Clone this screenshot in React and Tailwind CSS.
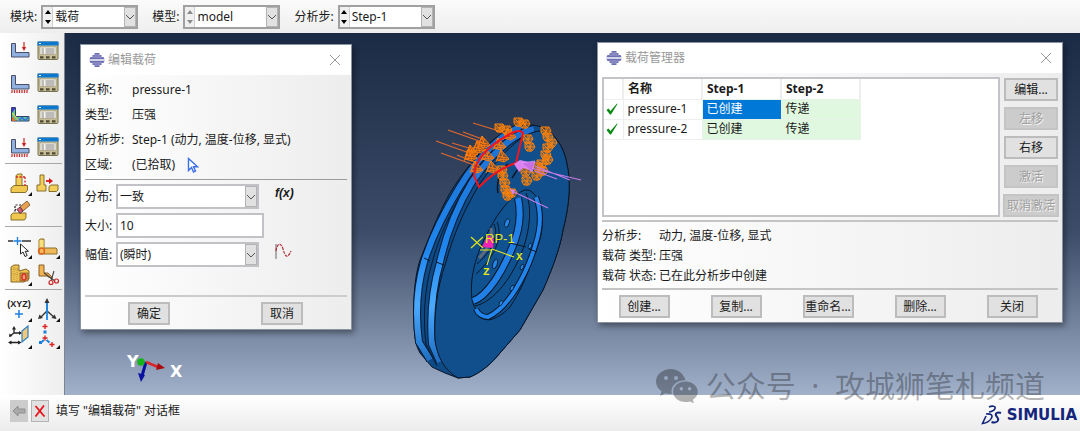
import React, { useState } from 'react'
import clsx from 'clsx'

/* ---------- toolbar icons ---------- */

const Corner = () => <path d="M24 20v4h-4z" fill="#111" />

const Bracket = ({ fill = '#8fb0e0' }) => (
    <path d="M3.500 4.500h4v9h13.500v4.500H3.500z" fill={fill} stroke="#4a4f66" strokeWidth="1" />
)

const LoadIcon = () => (
    <>
        <Bracket />
        <path d="M16 3v7" stroke="#c22" strokeWidth="1.200" />
        <path d="M13.800 8h4.400L16 12z" fill="#c22" />
    </>
)

const BoundaryIcon = () => (
    <>
        <Bracket />
        <path d="M4 19v3M6.500 19v3M9 19v3M11.500 19v3M14 19v3M16.500 19v3M19 19v3" stroke="#c33" strokeWidth="1.300" />
    </>
)

const FieldIcon = () => (
    <>
        <path d="M3.500 4.500h4v9h13.500v4.500H3.500z" fill="#5bc98c" stroke="#30406a" />
        <path d="M4 5h3.500L4 10z" fill="#4433cc" />
        <path d="M4 13l4 5H4z" fill="#e07030" />
        <path d="M8 14l3 3.500 3-3 3 3 3.500-3.500" fill="none" stroke="#3a6be0" strokeWidth="1.500" />
        <path d="M4.500 10l6 7.500" stroke="#e8d84a" strokeWidth="1.200" />
    </>
)

const LoadCaseIcon = () => (
    <>
        <LoadIcon />
        <path d="M4 19v3M6.500 19v3M9 19v3M11.500 19v3M14 19v3M16.500 19v3M19 19v3" stroke="#c33" strokeWidth="1.300" />
    </>
)

const ManagerIcon = () => (
    <>
        <rect x="2" y="3" width="20" height="17.500" rx="1" fill="#c6bd98" stroke="#77724f" />
        <rect x="1.500" y="2.500" width="21" height="4" fill="#0d78cf" />
        <path d="M3 4.500h2" stroke="#fff" />
        <rect x="4" y="8" width="16" height="7.500" fill="#f7f6ee" stroke="#999272" strokeWidth=".6" />
        <path d="M5.500 10h2.500M9.500 10h9M5.500 12h2.500M9.500 12h9M5.500 14h2.500M9.500 14h9" stroke="#666" strokeWidth=".8" />
        <path d="M4 18.300h3.500M10 18.300h3.500M16 18.300h3.500" stroke="#4e4a33" strokeWidth="2.200" />
    </>
)

const PartitionIcon = () => (
    <>
        <path d="M8 3.500l2-1.500h4v13H8z" fill="#f3cf5a" stroke="#7a6420" strokeWidth=".9" />
        <path d="M3 16l3-2.500h13.500V18l-2 2.500H3z" fill="#f0c850" stroke="#7a6420" strokeWidth=".9" />
        <path d="M8 5h9M17 5v9" stroke="#d22" fill="none" strokeWidth="1.300" strokeDasharray="2 1.500" />
        <Corner />
    </>
)

const ExtendIcon = () => (
    <>
        <path d="M4 3h4v10h2v6H1v-6h3z" fill="#f3cf5a" stroke="#7a6420" strokeWidth=".9" />
        <path d="M13 14.500l2-1.500h7v5l-1.500 1.500H13z" fill="#f3cf5a" stroke="#7a6420" strokeWidth=".9" />
        <path d="M10 9h4" stroke="#d11" strokeWidth="1.800" />
        <path d="M13 6l4 3-4 3z" fill="#d11" />
        <Corner />
    </>
)

const EraseIcon = () => (
    <>
        <path d="M7 16V6h8M8 10l-2 3" fill="none" stroke="#222" strokeWidth="1.200" strokeDasharray="2 1.500" />
        <path d="M3 16l2-2h13v4.500L16.500 21H3z" fill="#f0c850" stroke="#7a6420" strokeWidth=".9" />
        <path d="M12 8l3 4 7-6-3-4z" fill="#e8a352" stroke="#7b5424" strokeWidth=".9" />
        <path d="M12 8l3 4-3 2.500L9 10.500z" fill="#d2607a" stroke="#5a2c3a" strokeWidth=".9" />
    </>
)

const PickIcon = () => (
    <>
        <path d="M0 6h5M14 6h9" stroke="#333" strokeWidth="1.300" />
        <path d="M9.500 2v8M5.500 6h8" stroke="#1c7fe0" strokeWidth="1.300" />
        <path d="M12.500 9v10l2.500-2 2 4.500 2.200-1-2-4.200h3.300z" fill="#fff" stroke="#222" />
        <Corner />
    </>
)

const FilletIcon = () => (
    <>
        <path d="M3 5l1.500-1H8v9h12l1 1v5H3z" fill="#f0b95a" stroke="#7a6420" strokeWidth=".9" />
        <path d="M3.500 5h4v8h-4z" fill="#f8e07c" />
        <circle cx="5.500" cy="16" r="3" fill="none" stroke="#e0641e" strokeWidth="1.400" />
        <Corner />
    </>
)

const MeshIcon = () => (
    <>
        <path d="M3 5l3-2h5v6l7-2 3 2v8l-5 3H3z" fill="#ecc152" stroke="#7a5c20" strokeWidth=".9" />
        <path d="M3 7h8M6 3v16M9 6v13M3 12h8" stroke="#a37c2a" strokeWidth=".6" strokeDasharray="1 1" />
        <path d="M12 11h8v8h-8z" fill="#cf8f46" stroke="#7a5c20" strokeWidth=".7" />
        <ellipse cx="16" cy="15" rx="2" ry="3.200" fill="#f0a070" stroke="#d22" strokeWidth="1.200" />
        <Corner />
    </>
)

const CutIcon = () => (
    <>
        <path d="M3 3h5v8h4l4 4v2l-5-3H3z" fill="#f3b552" stroke="#7a5420" strokeWidth=".9" />
        <path d="M8 11l11 8M18 9l-3 10" stroke="#444" strokeWidth="1.100" />
        <circle cx="15" cy="20.500" r="2" fill="none" stroke="#c22" strokeWidth="1.200" />
        <circle cx="20.500" cy="19" r="2" fill="none" stroke="#c22" strokeWidth="1.200" />
    </>
)

const XyzIcon = () => (
    <>
        <text x="11" y="9" textAnchor="middle" fontFamily="Liberation Sans" fontWeight="bold" fontSize="9" fill="#222">(XYZ)</text>
        <path d="M11 12v8M7 16h8" stroke="#1c7fe0" strokeWidth="1.500" />
        <Corner />
    </>
)

const AxesIcon = () => (
    <>
        <path d="M11 3v10M4 20l7-7 8 7" fill="none" stroke="#333" strokeWidth="1.300" />
        <path d="M11 3v19" stroke="#1c86e8" strokeWidth="1.800" />
        <path d="M11 0L8.500 5h5zM2 21l1.500-4.500L7 20zM20.500 21L15.500 20l3.200-3.500z" fill="#333" />
        <Corner />
    </>
)

const PlaneIcon = () => (
    <>
        <path d="M6 3v5l-4 3M6 8h7M2 17.500h10" fill="none" stroke="#222" strokeWidth="1.300" />
        <path d="M6 1L4 4.500h4zM14 8l-3-2v4zM1 12l.5-3.500L4.500 11zM0 17.500l3.500-2v4zM13.500 17.500l-3.500-2v4z" fill="#222" />
        <path d="M14 6l6-5v11l-6 5z" fill="#f3c977" stroke="#2d7fc4" strokeWidth="1.200" />
        <Corner />
    </>
)

const CsysIcon = () => (
    <>
        <rect x="7.500" y="5.500" width="3" height="3" fill="#1c7fe0" />
        <rect x="3" y="16" width="3" height="3" fill="#1c7fe0" />
        <path d="M8 15l-3 2.500M10.500 15l3 2.500" stroke="#1c7fe0" strokeWidth="2" />
        <path d="M9-1v5M6.500 1.500h5M9 10.500v5M6.500 13h5M16 17v5M13.500 19.500h5" stroke="#d22" strokeWidth="1.400" />
        <Corner />
    </>
)

const toolGroups = [
    [
        ['创建载荷', LoadIcon], ['载荷管理器', ManagerIcon],
        ['创建边界条件', BoundaryIcon], ['边界条件管理器', ManagerIcon],
        ['创建预定义场', FieldIcon], ['预定义场管理器', ManagerIcon],
        ['创建载荷工况', LoadCaseIcon], ['载荷工况管理器', ManagerIcon],
    ],
    [
        ['拆分面', PartitionIcon], ['延伸面', ExtendIcon],
        ['删除特征', EraseIcon],
    ],
    [
        ['拆分边', PickIcon], ['圆角', FilletIcon],
        ['网格', MeshIcon], ['切割', CutIcon],
    ],
    [
        ['创建基准点', XyzIcon], ['创建基准轴', AxesIcon],
        ['创建基准平面', PlaneIcon], ['创建坐标系', CsysIcon],
    ],
]

const ToolBox = () => (
    <aside className="w-[65px] shrink-0 border-r border-[#7d8594] bg-linear-to-r from-white to-[#eeeeee] pr-0.5 pl-[5px] pt-0.5">
        {toolGroups.map((group, i) => (
            <div
                key={i}
                className={clsx('grid grid-cols-[28px_28px] pl-px', i > 0 && 'border-t border-[#a8a8a8] pt-1.5 pb-0.5')}
            >
                {group.map(([name, Icon]) => (
                    <button key={name} title={name} className={clsx('flex items-center justify-center', i === 0 ? 'h-8' : 'h-[27px]')}>
                        <svg viewBox="0 0 24 24" className="size-6 overflow-visible"><Icon /></svg>
                    </button>
                ))}
            </div>
        ))}
    </aside>
)

/* ---------- small controls ---------- */

const Chevron = ({ className }) => (
    <span className={clsx('pointer-events-none absolute flex items-center justify-center border border-[#b4b4b4] bg-[#e1e1e1]', className)}>
        <svg viewBox="0 0 10 6" className="h-1.5 w-2.5 shrink-0"><path d="M1 1l4 4 4-4" fill="none" stroke="#555" /></svg>
    </span>
)

const ContextSelect = ({ id, label, value, disabled }) => (
    <div className="flex items-center gap-1">
        <label htmlFor={id}>{label}</label>
        <div className="relative flex h-6 w-[97px] border-2 border-[#a0a0a0] bg-white">
            <div className={clsx('flex w-2.5 shrink-0 flex-col border-r border-[#d0d0d0] bg-[#f0f0f0]', disabled ? 'text-[#8a8a8a]' : 'text-black')}>
                <button aria-label="上一个" className="flex flex-1 items-center justify-center">
                    <svg viewBox="0 0 6 4" className="h-1 w-1.5"><path d="M3 0l3 4H0z" fill="currentColor" /></svg>
                </button>
                <button aria-label="下一个" className="flex flex-1 items-center justify-center">
                    <svg viewBox="0 0 6 4" className="h-1 w-1.5"><path d="M0 0h6L3 4z" fill="currentColor" /></svg>
                </button>
            </div>
            <select id={id} defaultValue={value} className="min-w-0 flex-1 appearance-none pl-0.5 outline-none">
                <option>{value}</option>
            </select>
            <Chevron className="inset-y-0 right-0 w-3" />
        </div>
    </div>
)

const PushButton = ({ className, children, ...props }) => (
    <button
        className={clsx(
            'h-[23px] border-2 border-[#bcbcbc] bg-[#e1e1e1] whitespace-nowrap disabled:border-[#c4c4c4] disabled:bg-[#cccccc] disabled:text-[#a0a0a0] disabled:text-shadow-[1px_1px_0_#f4f4f4]',
            className
        )}
        {...props}
    >
        {children}
    </button>
)

const TitleBar = ({ title }) => (
    <header className="flex h-[30px] items-center gap-[3px] bg-white pr-2.5 pl-2 text-[#999999]">
        <svg viewBox="0 0 16 16" className="size-4">
            <path d="M5.500 1h5v2h2v2h2L16 8l-1.500 3h-2v2h-2v2h-5v-2h-2v-2h-2L0 8l1.500-3h2V3h2z" fill="#6e70b4" />
            <path d="M5 3h6M3 5h10M3 11h10M5 13h6" stroke="#a9abd6" strokeWidth=".8" />
            <path d="M0 8h16" stroke="#fff" strokeWidth="1.400" />
        </svg>
        <h2 className="flex-1">{title}</h2>
        <button aria-label="关闭窗口">
            <svg viewBox="0 0 12 12" className="size-3"><path d="M1 1l10 10M11 1L1 11" stroke="#999" /></svg>
        </button>
    </header>
)

/* ---------- dialogs ---------- */

const EditLoadDialog = () => {
    const [size, setSize] = useState('10')

    const info = [
        ['名称:', 'pressure-1'],
        ['类型:', '压强'],
        ['分析步:', 'Step-1 (动力, 温度-位移, 显式)'],
    ]

    return (
        <section className="absolute left-[15px] top-[11px] w-[272px] border border-[#8c93a0] bg-linear-to-r from-white to-[#ededed] shadow-[2px_3px_6px_rgba(0,0,0,0.4)]">
            <TitleBar title="编辑载荷" />
            <dl className="mx-1 grid grid-cols-[47px_1fr] border-b border-[#9c9c9c] pt-0.5 pb-0.5 leading-[25px]">
                {info.map(([k, v]) => (
                    <React.Fragment key={k}>
                        <dt className="whitespace-nowrap">{k}</dt>
                        <dd>{v}</dd>
                    </React.Fragment>
                ))}
                <dt>区域:</dt>
                <dd className="flex items-center gap-3">
                    (已拾取)
                    <button aria-label="编辑区域">
                        <svg viewBox="0 0 12 16" className="h-4 w-3">
                            <path d="M1.500 1.500v12l3-3 2 4.500 2-1-2-4.200h4z" fill="#fff" stroke="#3b6fe8" strokeWidth="1.400" />
                        </svg>
                    </button>
                </dd>
            </dl>
            <form className="mx-1 flex flex-col gap-1 border-b-2 border-[#cccccc] pt-1 pb-7">
                <div className="flex items-center">
                    <label htmlFor="dist" className="w-[31px]">分布:</label>
                    <div className="relative h-[25px] w-[143px]">
                        <select id="dist" className="size-full appearance-none border-2 border-[#c2c2c6] bg-white pl-0.5">
                            <option>一致</option>
                        </select>
                        <Chevron className="inset-y-0.5 right-0.5 w-3" />
                    </div>
                    <button type="button" className="ml-4 pb-2 font-['Liberation_Sans'] leading-4 font-bold italic">f(x)</button>
                </div>
                <div className="flex items-center">
                    <label htmlFor="size" className="w-[31px]">大小:</label>
                    <input
                        id="size"
                        value={size}
                        onChange={(e) => setSize(e.target.value)}
                        className="h-[25px] w-[148px] border-2 border-[#c2c2c6] bg-white pl-0.5"
                    />
                </div>
                <div className="flex items-center">
                    <label htmlFor="amp" className="w-[31px]">幅值:</label>
                    <div className="relative h-[25px] w-[143px]">
                        <select id="amp" className="size-full appearance-none border-2 border-[#c2c2c6] bg-white pl-0.5">
                            <option>(瞬时)</option>
                        </select>
                        <Chevron className="inset-y-0.5 right-0.5 w-3" />
                    </div>
                    <button type="button" aria-label="创建幅值" className="ml-4 pb-1.5">
                        <svg viewBox="0 0 17 17" className="size-[17px]">
                            <path d="M1 1v15" stroke="#666" />
                            <path d="M1 8C2 0 6-1 8 6s4 11 8 2" fill="none" stroke="#b03038" strokeWidth="1.200" strokeDasharray="3 1" />
                        </svg>
                    </button>
                </div>
            </form>
            <footer className="flex justify-between pt-[5px] pr-12 pb-1 pl-[47px]">
                <PushButton className="w-[42px]">确定</PushButton>
                <PushButton className="w-[42px]">取消</PushButton>
            </footer>
        </section>
    )
}

const loads = [
    { name: 'pressure-1', steps: ['已创建', '传递'] },
    { name: 'pressure-2', steps: ['已创建', '传递'] },
]

const LoadManager = () => {
    const [selected, setSelected] = useState('pressure-1:0')

    return (
        <section className="absolute left-[532px] top-[9px] w-[466px] border border-[#8c93a0] bg-linear-to-r from-white to-[#ededed] shadow-[2px_3px_6px_rgba(0,0,0,0.4)]">
            <TitleBar title="载荷管理器" />
            <div className="flex gap-1 pt-1 pr-1 pl-1">
                <div className="flex-1 border-2 border-[#c4c4c8] bg-white">
                    <table className="w-[256px] table-fixed border-collapse text-left">
                        <thead>
                            <tr className="h-5">
                                <th className="w-[19px] border-r-2 border-[#eeeeee]" aria-label="激活" />
                                <th className="w-[79px] border-r-2 border-[#eeeeee] pl-1">名称</th>
                                <th className="w-[79px] border-r-2 border-[#eeeeee] pl-1">Step-1</th>
                                <th className="w-[79px] border-r-2 border-[#eeeeee] pl-1">Step-2</th>
                            </tr>
                        </thead>
                        <tbody>
                            {loads.map((load) => (
                                <tr key={load.name} className="h-5">
                                    <td className="border border-l-0 border-[#eeeeee]">
                                        <svg viewBox="0 0 12 12" className="ml-0.5 size-3">
                                            <path d="M.5 7L2.500 5.500 4.500 8 11 .5l.5.5L5 11.500H4z" fill="#0a8a14" />
                                        </svg>
                                    </td>
                                    <td className="border border-[#eeeeee] pl-1">{load.name}</td>
                                    {load.steps.map((s, i) => {
                                        const key = `${load.name}:${i}`
                                        return (
                                            <td
                                                key={key}
                                                onClick={() => setSelected(key)}
                                                className={clsx('border border-[#e8f3e8] pl-1', selected === key ? 'bg-[#0078d7] text-white' : 'bg-[#dff8df]')}
                                            >
                                                {s}
                                            </td>
                                        )
                                    })}
                                </tr>
                            ))}
                        </tbody>
                    </table>
                </div>
                <div className="flex w-[54px] flex-col gap-1.5 pt-px">
                    <PushButton>编辑...</PushButton>
                    <PushButton disabled>左移</PushButton>
                    <PushButton>右移</PushButton>
                    <PushButton disabled>激活</PushButton>
                    <PushButton disabled className="-mx-px">取消激活</PushButton>
                </div>
            </div>
            <dl className="mx-1 mt-[3px] grid grid-cols-[57px_1fr] border-y-2 border-[#c4c4c4] pt-1 pb-0.5 leading-5">
                <dt>分析步:</dt>
                <dd>动力, 温度-位移, 显式</dd>
                <dt className="whitespace-nowrap">载荷 类型:</dt>
                <dd>压强</dd>
                <dt className="whitespace-nowrap">载荷 状态:</dt>
                <dd>已在此分析步中创建</dd>
            </dl>
            <footer className="grid grid-cols-5 justify-items-center pt-[5px] pr-1 pb-1">
                {['创建...', '复制...', '重命名...', '删除...', '关闭'].map((t) => (
                    <PushButton key={t} className="w-[51px]">{t}</PushButton>
                ))}
            </footer>
        </section>
    )
}

/* ---------- 3D viewport ---------- */

// cone positions of the pressure arrows
const cones = [
    [484, 142], [472, 151], [488, 155], [500, 144], [510, 134], [477, 167], [493, 167], [503, 156],
    [471, 155], [479, 147],
]
// clamped region markers
const markers = [
    [519, 122], [525, 124], [500, 128], [507, 130], [528, 139], [530, 147], [546, 131], [548, 137],
    [552, 143], [548, 148], [546, 155], [542, 164], [538, 167], [543, 171], [537, 176], [526, 172],
    [527, 181], [502, 170], [503, 176], [505, 183], [506, 190], [508, 196], [512, 193], [548, 160],
]

const Cone = ({ x, y }) => (
    <g transform={`translate(${x} ${y})`} stroke="#ff7f0a" strokeWidth=".9">
        <path d="M-6 4L-2-6 6 3 1 6z" fill="#c95a12" fillOpacity=".6" />
        <path d="M-6 4L6 3M-2-6L1 6M-6 0L4 2M-4 5l5-8M-2-6L-7 6" fill="none" />
    </g>
)

const Marker = ({ x, y }) => (
    <g transform={`translate(${x} ${y})`} fill="none" stroke="#ff8207" strokeWidth="1">
        <path d="M-5-4h8l2 4-3 4h-5l-2-3z" fill="#ff8207" fillOpacity=".3" />
        <path d="M-5-4l8 8M3-4l-6 8M-5 0H5M0-4v9" />
    </g>
)

const BrakeDisc = () => (
    <svg viewBox="400 110 200 280" className="absolute left-[335px] top-[77px] h-[280px] w-[200px]">
        <defs>
            <linearGradient id="rim" gradientUnits="userSpaceOnUse" x1="0" y1="125" x2="0" y2="375">
                <stop offset="0" stopColor="#1d6fd0" />
                <stop offset=".5" stopColor="#1f86ee" />
                <stop offset=".72" stopColor="#4aaaff" />
                <stop offset="1" stopColor="#1460b4" />
            </linearGradient>
        </defs>
        <g strokeLinejoin="round">
            <path
                d="M533 125C522 123 508 130 493 140 478 154 462 173 450 193 438 214 428 240 420 260 415 275 413 297 414 320 414 338 416 346 420 353L432 367 445 373 458 378 470 377C482 372 492 363 500 353L520 330 543 290C553 267 560 248 563 230 568 210 570 195 569 177 567 160 564 149 557 140 550 130 541 126 533 125z"
                fill="#0e4a86" stroke="#0a1626"
            />
            <path d="M521 127C504 132 478 156 459 188 443 214 431 240 424 262 416 290 416 320 419 342L430 360" fill="none" stroke="#0a1a30" strokeWidth="8" />
            <path d="M521 127C504 132 478 156 459 188 443 214 431 240 424 262 416 290 416 320 419 342L430 360" fill="none" stroke="url(#rim)" strokeWidth="6" />
            <path d="M528 128C508 134 486 154 466 186 449 214 438 240 432 263 424 290 423 320 426 344L437 366" fill="none" stroke="#0a1a30" />
            <path d="M534 129C512 134 492 153 472 182 455 210 446 235 440 262 432 290 430 318 432 344L440 362" fill="none" stroke="#0a1a30" strokeWidth="8" />
            <path d="M534 129C512 134 492 153 472 182 455 210 446 235 440 262 432 290 430 318 432 344L440 362" fill="none" stroke="url(#rim)" strokeWidth="6" />
            <path
                d="M540 131C522 132 500 155 481 182 462 212 452 240 446 262 436 290 434 318 435 340 437 356 444 370 458 378L470 377C482 372 492 363 500 353L520 330 543 290C553 267 560 248 563 230 568 210 570 195 569 177 567 160 564 149 557 140 552 133 547 130 540 131z"
                fill="#104f8b" stroke="#0a1626"
            />
            <path d="M424 258l6 3M436 262l8 3" stroke="#0a1626" />
        </g>

        {/* hub bore with its stepped rings */}
        <g fill="none">
            <path
                d="M525 190C514 194 501 208 493 223 484 238 477 254 474 268 471 280 471 291 472 299 474 310 480 318 488 320 496 319 503 314 510 307 520 292 528 274 533 257 538 247 541 238 542 228 543 210 540 200 533 193 530 190 528 190 525 190z"
                fill="#10528f" stroke="#0a1626"
            />
            <path d="M536 197C541 210 541 228 535 246 526 276 508 308 488 317 483 317 478 314 476 309" stroke="#0a1626" strokeWidth="6" />
            <path d="M536 197C541 210 541 228 535 246 526 276 508 308 488 317 483 317 478 314 476 309" stroke="#2285ee" strokeWidth="4" />
            <path d="M526 193C532 206 530 228 524 246 514 276 494 302 475 306" stroke="#0a1626" strokeWidth="1" />
            <path d="M518 198C522 216 519 232 512 248 503 270 488 296 473 301" stroke="#0a1626" strokeWidth="8" />
            <path d="M518 198C522 216 519 232 512 248 503 270 488 296 473 301" stroke="#2080e8" strokeWidth="6" />
            <path d="M497 222C503 236 496 256 476 274M494 224C500 238 490 252 477 264" stroke="#0a1626" />
            <path d="M491 228C493 238 488 250 479 258" stroke="#5d6a7d" strokeWidth="3" />
            <g fill="#2687ea" stroke="#0a1626" strokeWidth=".8">
                <ellipse cx="507" cy="223" rx="2.200" ry="4.500" transform="rotate(20 507 223)" />
                <ellipse cx="495" cy="264" rx="2.200" ry="5" transform="rotate(20 495 264)" />
                <ellipse cx="512" cy="288" rx="1.500" ry="3" transform="rotate(25 512 288)" />
                <ellipse cx="522" cy="267" rx="1.500" ry="3" transform="rotate(25 522 267)" />
                <ellipse cx="530" cy="246" rx="1.500" ry="3" transform="rotate(20 530 246)" />
                <ellipse cx="501" cy="303" rx="1.500" ry="3" transform="rotate(30 501 303)" />
            </g>
            <path d="M510 243l16 4M529 249l8 3" stroke="#0a1626" />
            <path d="M498 193C496 182 500 170 508 164M512 178l8-12" stroke="#0a1626" strokeWidth="1.500" />
        </g>

        {/* loads */}
        <path d="M473 123l36 11M448 130l34 12M436 141l36 13M463 132l22 8M452 143l20 6M441 153l33 12M457 155l20 8" stroke="#e2672c" strokeWidth="1.200" />
        {markers.map(([x, y]) => <Marker key={`${x}-${y}`} x={x} y={y} />)}
        {cones.map(([x, y]) => <Cone key={`${x}-${y}`} x={x} y={y} />)}
        <path d="M523 133L516 163C500 168 488 178 479 187L474 176C474 160 488 146 510 134 518 129 523 131 523 134z" fill="none" stroke="#f0141e" strokeWidth="2" />
        <path d="M527 167l54 13M535 166l35 14M535 171l22 8M512 191l36 17" stroke="#c57be8" strokeWidth="1.200" />
        <path d="M514 164l6-4 13 3-2 7-8-2-4 4z" fill="#da82f2" />
        <path d="M521 163l14-2-3 11z" fill="#c86fe6" stroke="#e9a3fa" strokeWidth=".6" />
        <path d="M510 189l5 1-2 5z" fill="#da82f2" />

        {/* reference point and its axes */}
        <path d="M482 247l6-12 6 4-1 9z" fill="#f023b4" />
        <path d="M471 237l12 11M483 237l-12 11M492 249l22 8M492 249l-5 16M480 250h12" stroke="#e6e619" strokeWidth="1.100" />
        <g fill="#e6e619" fontFamily="Liberation Sans">
            <text x="485" y="243" fontSize="13">RP-1</text>
            <text x="516" y="260" fontSize="11" fontFamily="Liberation Mono" fontWeight="bold">X</text>
            <text x="483" y="275" fontSize="11" fontFamily="Liberation Mono" fontWeight="bold">Z</text>
        </g>
    </svg>
)

const Triad = () => (
    <svg viewBox="120 345 70 40" className="absolute left-[55px] top-[312px] h-10 w-[70px]">
        <path d="M146 362l-4 14" stroke="#0a10a0" strokeWidth="3" />
        <path d="M138 373l7 2-4 7z" fill="#0a10a0" />
        <path d="M146 362l12 5" stroke="#d8262a" strokeWidth="2.500" />
        <path d="M158 363l7 5-9 2z" fill="#a80c10" />
        <circle cx="141" cy="362" r="3.800" fill="#16b41c" />
        <g fill="#fff" fontFamily="DejaVu Sans" fontWeight="bold" fontSize="16">
            <text x="127" y="367">Y</text>
            <text x="170" y="377">X</text>
        </g>
    </svg>
)

const Viewport = () => (
    <main className="relative min-h-[362px] flex-1 overflow-hidden bg-linear-to-b from-[#1b2b45] via-[#3d4d69] via-55% to-[#a2b1ca]">
        <BrakeDisc />
        <Triad />
        <EditLoadDialog />
        <LoadManager />
    </main>
)

const Watermark = () => (
    <div className="pointer-events-none absolute right-[35px] bottom-7 flex items-center gap-2 text-black/30">
        <svg viewBox="0 0 42 34" className="h-[34px] w-[42px]" fill="currentColor">
            <path
                fillRule="evenodd"
                d="M15 0C6.500 0 0 5.600 0 12.500c0 4 2 7.500 5.500 9.800L4 27l5.500-2.800c2 .5 4 .8 6.300.7C14 17 21 11 29.500 11.300 28 5 22 0 15 0zM10 7a2 2 0 110 4 2 2 0 010-4zM20 7a2 2 0 110 4 2 2 0 010-4z"
            />
            <path
                fillRule="evenodd"
                d="M29.500 12.500c-7 0-12.500 4.500-12.500 10.200S22.500 33 29.500 33c1.600 0 3-.2 4.400-.6L38 34.500l-1.200-3.700c3-1.900 5-4.800 5-8.100 0-5.700-5.500-10.200-12.300-10.200zM25.300 18a1.700 1.700 0 110 3.400 1.700 1.700 0 010-3.400zM33.600 18a1.700 1.700 0 110 3.400 1.700 1.700 0 010-3.400z"
            />
        </svg>
        <span className="text-[30px] leading-7 whitespace-pre">公众号  ·  攻城狮笔札频道</span>
    </div>
)

const StatusBar = () => (
    <footer className="flex h-9 items-center bg-linear-to-b from-white to-[#ececec] pr-[3px] pb-1 pl-2.5">
        <button aria-label="后退" disabled className="flex h-[22px] w-[18px] items-center justify-center bg-[#cccccc]">
            <svg viewBox="0 0 16 14" className="h-3.5 w-4"><path d="M7 2L2 7l5 5V9h7V5H7z" fill="#aaaaaa" stroke="#8e8e8e" /></svg>
        </button>
        <button aria-label="取消步骤" className="ml-[3px] flex h-[22px] w-[18px] items-center justify-center border border-[#b4b4b4] bg-[#e1e1e1]">
            <svg viewBox="0 0 12 12" className="size-3"><path d="M1.500 1l9 10.500M10 .5l-8.500 11" stroke="#e8141c" strokeWidth="1.800" /></svg>
        </button>
        <p className="ml-[7px] flex-1">填写 "编辑载荷" 对话框</p>
        <div className="flex items-center gap-1 pt-2 text-[#14267c]">
            <svg viewBox="0 0 22 20" className="h-5 w-[22px]" fill="none" stroke="currentColor" strokeWidth="1.600">
                <path d="M8 2c3-1.500 7-1 6 1.500C13.500 5 11 6.500 8 7M5 9c5-.5 7 1 5.500 4C9 16 5 18 1.500 18.500L5 11" />
                <path d="M20 8c-3-1.200-6 0-5 2.500 1 2 3 2.500 2 5-.8 2-4 2.500-6.500 1.500" strokeWidth="2" />
            </svg>
            <span className="font-['DejaVu_Sans',sans-serif] text-[15px] leading-4 font-bold">SIMULIA</span>
        </div>
    </footer>
)

const App = () => {
    return (
        <div className="relative flex min-h-screen flex-col bg-[#f7f7f7] font-['Noto_Sans','Noto_Sans_CJK_SC',sans-serif] text-[12px] leading-4 text-[#1a1a1a]">
            <nav className="flex h-[33px] items-center gap-3.5 bg-linear-to-b from-[#fbfbfb] to-[#eeeeee] pl-2.5">
                <ContextSelect id="module" label="模块:" value="载荷" />
                <ContextSelect id="model" label="模型:" value="model" disabled />
                <ContextSelect id="step" label="分析步:" value="Step-1" />
            </nav>
            <div className="flex flex-1">
                <ToolBox />
                <Viewport />
            </div>
            <StatusBar />
            <Watermark />
        </div>
    )
}

export default App
